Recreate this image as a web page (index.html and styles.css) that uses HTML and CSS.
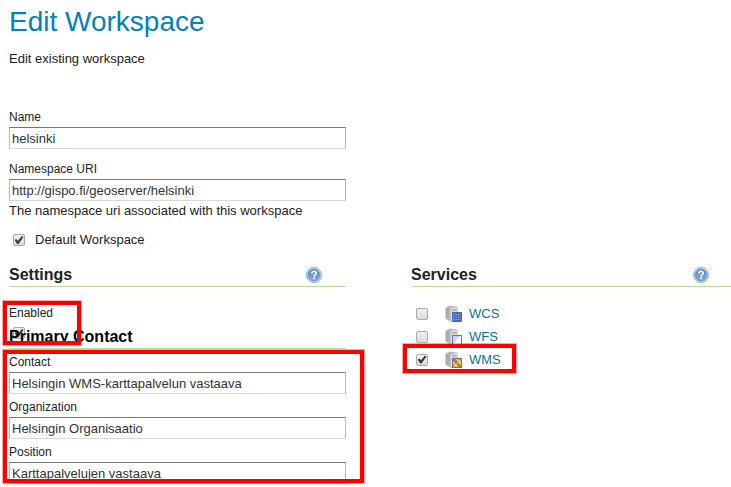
FILE: index.html
```html
<!DOCTYPE html>
<html lang="en">
<head>
<meta charset="utf-8">
<title>Edit Workspace</title>
<link rel="stylesheet" href="styles.css">
</head>
<body>
<svg width="0" height="0" class="defs" aria-hidden="true">
  <defs>
    <linearGradient id="tower" x1="0" x2="1">
      <stop offset="0" stop-color="#a6a6a9"/>
      <stop offset="1" stop-color="#cfcfd2"/>
    </linearGradient>
    <linearGradient id="ball" x1="0" y1="0" x2="0" y2="1">
      <stop offset="0" stop-color="#4f83c8"/>
      <stop offset="1" stop-color="#86b2e2"/>
    </linearGradient>
    <symbol id="server" viewBox="0 0 18 18">
      <path d="M.8 3 5 .8 12.500 2v13L6 16.500.8 13.500z" fill="url(#tower)" stroke="#b5b5b7" stroke-width=".6"/>
      <path d="M5.500 3 12.500 2v13L5.500 16z" fill="#dadadd"/>
      <path d="M7 5h4.500M7 7.500h4.500M7 10h4.500" stroke="#9a9a9f"/>
    </symbol>
    <symbol id="help" viewBox="0 0 16 16">
      <circle cx="8" cy="8" r="7.500" fill="#c3d7ef" stroke="#7fa3d2" stroke-width=".9"/>
      <circle cx="8" cy="8" r="5.700" fill="url(#ball)" stroke="#5481bd" stroke-width=".7"/>
      <path d="M5.900 6.500c0-3 4.300-2.900 4.300-.3 0 1.500-2.100 1.500-2.100 3.200" fill="none" stroke="#fff" stroke-width="1.700"/>
      <circle cx="8.100" cy="11.300" r="1" fill="#fff"/>
    </symbol>
  </defs>
</svg>
<main class="page">
  <header class="intro">
    <h1>Edit Workspace</h1>
    <p>Edit existing workspace</p>
  </header>

  <section class="basics">
    <div class="field">
      <label for="name">Name</label>
      <input type="text" id="name" value="helsinki">
    </div>
    <div class="field">
      <label for="uri">Namespace URI</label>
      <input type="text" id="uri" value="http://gispo.fi/geoserver/helsinki">
      <p class="hint">The namespace uri associated with this workspace</p>
    </div>
    <div class="check-row">
      <input type="checkbox" id="default" checked>
      <label for="default">Default Workspace</label>
    </div>
  </section>

  <section class="settings">
    <div class="heading">
      <h2>Settings</h2>
      <a href="#settings-help" aria-label="Settings help"><svg class="help"><use href="#help"/></svg></a>
    </div>
    <div class="enabled">
      <label for="enabled">Enabled</label>
      <input type="checkbox" id="enabled" checked>
      <span class="mark mark-enabled"></span>
    </div>
    <div class="heading contact-heading"><h2>Primary Contact</h2></div>
    <div class="contact">
      <div class="field">
        <label for="contact">Contact</label>
        <input type="text" id="contact" value="Helsingin WMS-karttapalvelun vastaava">
      </div>
      <div class="field">
        <label for="org">Organization</label>
        <input type="text" id="org" value="Helsingin Organisaatio">
      </div>
      <div class="field">
        <label for="position">Position</label>
        <input type="text" id="position" value="Karttapalvelujen vastaava">
      </div>
      <span class="mark mark-contact"></span>
    </div>
  </section>

  <section class="services">
    <div class="heading">
      <h2>Services</h2>
      <a href="#services-help" aria-label="Services help"><svg class="help"><use href="#help"/></svg></a>
    </div>
    <ul>
      <li>
        <input type="checkbox" aria-label="WCS">
        <svg class="icon" viewBox="0 0 18 18">
          <use href="#server"/>
          <rect x="7.500" y="7.500" width="9" height="9" fill="#4a69bd" stroke="#5468ae"/>
          <path d="M8 9.500h8M8 12h8M8 14.500h8" stroke="#a9bdf0" stroke-width="1.200" stroke-dasharray="1.300 1.300"/>
        </svg>
        <a href="#wcs">WCS</a>
      </li>
      <li>
        <input type="checkbox" aria-label="WFS">
        <svg class="icon" viewBox="0 0 18 18">
          <use href="#server"/>
          <rect x="7.500" y="7.500" width="9" height="9" fill="#fff" stroke="#6478b8"/>
          <path d="M8 8h8c-4 1-4 3-5 5-.8 1.500-1.500 2.500-3 3z" fill="#c3d6f4"/>
        </svg>
        <a href="#wfs">WFS</a>
      </li>
      <li>
        <input type="checkbox" aria-label="WMS" checked>
        <svg class="icon" viewBox="0 0 18 18">
          <use href="#server"/>
          <rect x="7.500" y="7.500" width="9" height="9" fill="#e8d85c" stroke="#6673a4"/>
          <path d="M8 8h2.500l5.500 7v1h-2.500L8 10z" fill="#e0623c"/>
          <path d="M12 8h4v3zM8 12l3 4H8z" fill="#91b65a"/>
          <path d="M15.500 9l-6 6.500" stroke="#f6e86c"/>
        </svg>
        <a href="#wms">WMS</a>
        <span class="mark mark-wms"></span>
      </li>
    </ul>
  </section>
</main>
</body>
</html>
```
FILE: styles.css
```css
* { box-sizing: border-box; }

body {
  margin: 0;
  background: #fff;
  color: #222;
  font: 13px/18px "Liberation Sans", Arial, sans-serif;
}

h1, h2, p, ul { margin: 0; padding: 0; }

a { color: #0076a1; text-decoration: none; }

.defs { position: absolute; }

.page {
  display: grid;
  grid-template-columns: 337fr 320fr;
  column-gap: 65px;
  padding: 6px 0 0 9px;
}

.intro { grid-column: 1 / -1; }

h1 {
  color: #0083b9;
  font-size: 28px;
  font-weight: normal;
  line-height: 32px;
  margin-bottom: 12px;
}

.basics {
  grid-column: 1;
  display: grid;
  gap: 12px;
  padding-top: 41px;
}

.settings, .services { padding-top: 15px; }
.settings { grid-column: 1; }

.field label, .enabled label {
  display: block;
  margin-bottom: 2px;
  font-size: 12px;
  line-height: 16px;
}

input[type="text"] {
  display: block;
  width: 100%;
  height: 22px;
  padding: 1px 2px 0;
  border: 1px solid;
  border-color: #777 #bbb #d8d8d8;
  background: #fff;
  color: #333;
  font: inherit;
}

.hint { padding-top: 1px; margin-bottom: -1px; }

input[type="checkbox"] {
  appearance: none;
  display: grid;
  place-items: center;
  width: 12px;
  height: 12px;
  margin: 0;
  border: 1px solid #aaa;
  border-radius: 2px;
  background: linear-gradient(#eee, #ddd);
}

input[type="checkbox"]:checked::before {
  content: "";
  width: 9px;
  height: 8px;
  background: #3c3c3c;
  clip-path: polygon(0 50%, 20% 38%, 38% 60%, 82% 0, 100% 12%, 44% 100%, 30% 100%);
}

.check-row {
  display: flex;
  align-items: center;
  gap: 10px;
  padding-left: 4px;
}

.heading {
  display: flex;
  justify-content: space-between;
  align-items: center;
  height: 23px;
  padding-right: 7%;
  border-bottom: 1px solid #c2dc96;
}

.heading a { display: flex; }

.help { width: 16px; height: 16px; }

h2 { font-size: 16px; line-height: 20px; }

.enabled {
  position: relative;
  margin-top: 18px;
}

.enabled input { margin: 6px 0 0 4px; }

.contact-heading {
  position: relative;
  margin-top: -13px;
  color: #000;
}

.contact {
  position: relative;
  display: grid;
  gap: 5px;
  padding-top: 5px;
}

.services ul {
  list-style: none;
  padding-top: 15px;
}

.services li {
  position: relative;
  display: flex;
  align-items: center;
  height: 23px;
  padding-left: 5px;
}

.icon {
  width: 18px;
  height: 18px;
  margin: 0 6px 0 17px;
}

/* Highlight frames laid over the form */
.mark {
  position: absolute;
  z-index: 1;
  border: 4px solid #f00;
  outline: 1px solid #ff000059;
  pointer-events: none;
}

.mark-enabled { left: -6px; top: -4px; width: 78px; height: 44px; }
.mark-contact { left: -6px; right: -18px; top: 1px; bottom: 1px; }
.mark-wms { left: -8px; top: -4px; width: 113px; height: 29px; }
```
